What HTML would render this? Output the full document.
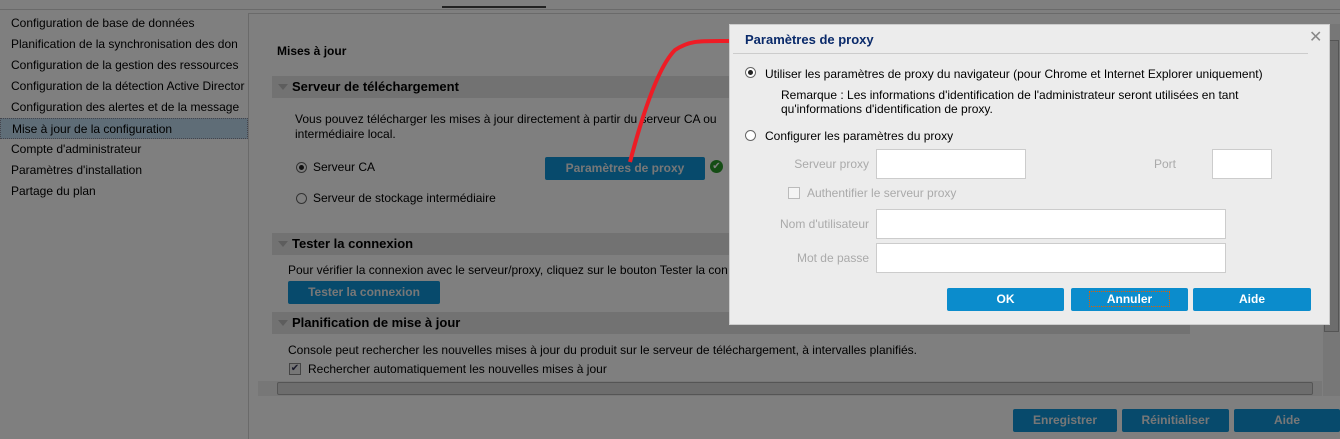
<!DOCTYPE html>
<html style="background:#fefefe"><head><meta charset="utf-8"><style>
*{margin:0;padding:0;box-sizing:border-box}
body{width:1340px;height:439px;background:#fefefe;font-family:"Liberation Sans",sans-serif;font-size:12px;color:#000;position:relative;overflow:hidden}
.a{position:absolute;white-space:nowrap}
.side div{height:21px;line-height:21px;padding-left:11px;font-size:12px}
.hdr{position:absolute;left:272px;width:918px;height:22px;background:#e4e4e4;font-weight:bold;font-size:13px;line-height:22px;padding-left:20px}
.hdr:before{content:"";position:absolute;left:6px;top:8px;border-left:5px solid transparent;border-right:5px solid transparent;border-top:6px solid #bbb}
.db{position:absolute;background:#0e94d8;color:#eee;font-weight:bold;text-align:center;border-radius:2px}
.bb{position:absolute;background:#0b8ccc;color:#fff;font-weight:bold;text-align:center;border-radius:2px;height:23px;line-height:23px;top:288px;width:117px;font-size:12px}
.inp{position:absolute;background:#fff;border:1px solid #ccc}
.lbl{position:absolute;color:#aaa;text-align:right;white-space:nowrap}
.rad{position:absolute;width:11px;height:11px;border-radius:50%;border:1px solid #666;background:#fff}
</style></head><body>
<div class="a" style="left:0;top:9px;width:1340px;height:1px;background:#d4d4d4"></div>
<div class="a" style="left:442px;top:6px;width:104px;height:2px;background:#444"></div>
<div class="side a" style="left:0;top:13px;width:248px">
<div>Configuration de base de données</div>
<div>Planification de la synchronisation des don</div>
<div>Configuration de la gestion des ressources</div>
<div>Configuration de la détection Active Director</div>
<div>Configuration des alertes et de la message</div>
<div style="background:#bedaee;border:1px dotted #889">Mise à jour de la configuration</div>
<div>Compte d'administrateur</div>
<div>Paramètres d'installation</div>
<div>Partage du plan</div>
</div>
<div class="a" style="left:248px;top:13px;width:1px;height:426px;background:#d4d4d4"></div>
<div class="a" style="left:248px;top:13px;width:1092px;height:1px;background:#d4d4d4"></div>
<div class="a" style="left:277px;top:44px;font-weight:bold">Mises à jour</div>
<div class="hdr" style="top:76px">Serveur de téléchargement</div>
<div class="a" style="left:295px;top:112px;line-height:15px">Vous pouvez télécharger les mises à jour directement à partir du serveur CA ou<br>intermédiaire local.</div>
<div class="rad" style="left:296px;top:162px"><div style="width:5px;height:5px;border-radius:50%;background:#222;margin:2px"></div></div>
<div class="a" style="left:313px;top:160px">Serveur CA</div>
<div class="db" style="left:545px;top:157px;width:160px;height:23px;line-height:23px">Paramètres de proxy</div>
<div class="a" style="left:710px;top:160px;width:13px;height:13px;border-radius:50%;background:#2a9a2a;color:#fff;font-size:10px;line-height:13px;text-align:center">✔</div>
<div class="rad" style="left:296px;top:193px"></div>
<div class="a" style="left:313px;top:191px">Serveur de stockage intermédiaire</div>
<div class="hdr" style="top:233px">Tester la connexion</div>
<div class="a" style="left:288px;top:263px">Pour vérifier la connexion avec le serveur/proxy, cliquez sur le bouton Tester la con</div>
<div class="db" style="left:288px;top:281px;width:152px;height:23px;line-height:23px">Tester la connexion</div>
<div class="hdr" style="top:312px">Planification de mise à jour</div>
<div class="a" style="left:288px;top:343px">Console peut rechercher les nouvelles mises à jour du produit sur le serveur de téléchargement, à intervalles planifiés.</div>
<div class="a" style="left:289px;top:363px;width:12px;height:12px;border:1px solid #888;background:#eee;font-size:10px;line-height:10px;color:#335;text-align:center">✔</div>
<div class="a" style="left:308px;top:362px">Rechercher automatiquement les nouvelles mises à jour</div>
<div class="a" style="left:258px;top:381px;width:1064px;height:15px;background:#eee"></div>
<div class="a" style="left:277px;top:382px;width:1036px;height:13px;background:#dadada;border:1px solid #aaa;border-radius:2px"></div>
<div class="a" style="left:1323px;top:24px;width:17px;height:372px;background:#eee"></div>
<div class="a" style="left:1324px;top:40px;width:15px;height:292px;background:#dadada;border:1px solid #aaa"></div>
<div class="db" style="left:1013px;top:409px;width:104px;height:23px;line-height:23px">Enregistrer</div>
<div class="db" style="left:1122px;top:409px;width:107px;height:23px;line-height:23px">Réinitialiser</div>
<div class="db" style="left:1234px;top:409px;width:106px;height:23px;line-height:23px">Aide</div>
<div class="a" style="left:0;top:0;width:1340px;height:439px;background:rgba(0,0,0,0.5)"></div>
<svg class="a" style="left:620px;top:35px" width="120" height="130"><path d="M10 127 C25 70 40 30 55 15 C70 5 80 6 110 6" stroke="#ee1c25" stroke-width="4" fill="none"/></svg>
<div class="a" style="left:729px;top:24px;width:601px;height:301px;background:#ececec;border:1px solid #ccc"></div>
<div class="a" style="left:745px;top:32px;font-weight:bold;font-size:13px;color:#0a2a6a">Paramètres de proxy</div>
<div class="a" style="left:1309px;top:27px;color:#888;font-size:16px">✕</div>
<div class="a" style="left:733px;top:53px;width:575px;height:1px;background:#ccc"></div>
<div class="rad" style="left:745px;top:67px"><div style="width:5px;height:5px;border-radius:50%;background:#222;margin:2px"></div></div>
<div class="a" style="left:765px;top:67px">Utiliser les paramètres de proxy du navigateur (pour Chrome et Internet Explorer uniquement)</div>
<div class="a" style="left:781px;top:88px;line-height:14px">Remarque : Les informations d'identification de l'administrateur seront utilisées en tant<br>qu'informations d'identification de proxy.</div>
<div class="rad" style="left:745px;top:130px"></div>
<div class="a" style="left:765px;top:129px">Configurer les paramètres du proxy</div>
<div class="lbl" style="left:760px;top:157px;width:109px">Serveur proxy</div>
<div class="inp" style="left:876px;top:149px;width:150px;height:30px"></div>
<div class="lbl" style="left:1120px;top:157px;width:56px">Port</div>
<div class="inp" style="left:1212px;top:149px;width:60px;height:30px"></div>
<div class="a" style="left:788px;top:187px;width:12px;height:12px;border:1px solid #bbb;background:#f4f4f4"></div>
<div class="lbl" style="left:807px;top:186px">Authentifier le serveur proxy</div>
<div class="lbl" style="left:760px;top:217px;width:109px">Nom d'utilisateur</div>
<div class="inp" style="left:876px;top:209px;width:350px;height:30px"></div>
<div class="lbl" style="left:760px;top:251px;width:109px">Mot de passe</div>
<div class="inp" style="left:876px;top:243px;width:350px;height:30px"></div>
<div class="bb" style="left:947px">OK</div>
<div class="bb" style="left:1071px"><span style="border:1px dotted #e06000;padding:0 17px">Annuler</span></div>
<div class="bb" style="left:1193px;width:118px">Aide</div>
</body></html>
